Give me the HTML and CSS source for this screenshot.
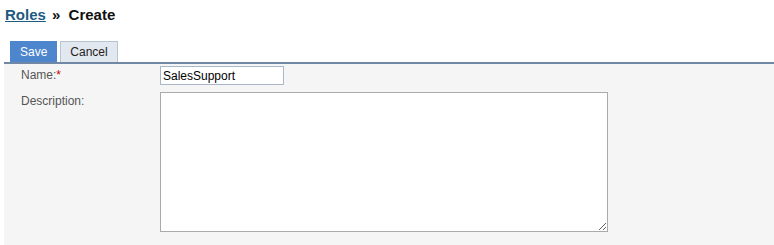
FILE: index.html
```html
<!DOCTYPE html>
<html lang="en">
<head>
    <meta charset="UTF-8">
    <title>Roles - Create</title>
    <link rel="stylesheet" href="styles.css">
</head>
<body>
    <h1 class="crumbs"><a href="#">Roles</a> <span class="sep">&raquo;</span> Create</h1>
    <div class="toolbar">
        <button class="tab primary">Save</button>
        <button class="tab">Cancel</button>
    </div>
    <div class="panel">
        <div class="row">
            <label for="name">Name:<span class="req">*</span></label>
            <input type="text" id="name" value="SalesSupport">
        </div>
        <div class="row">
            <label for="desc">Description:</label>
            <textarea id="desc"></textarea>
        </div>
    </div>
</body>
</html>
```

FILE: styles.css
```css
body {
    margin: 0;
    font-family: Arial, "Liberation Sans", sans-serif;
    font-size: 12px;
    color: #333;
    background: #fff;
}

.crumbs {
    margin: 0;
    padding: 6px 5px 0;
    height: 34px;
    box-sizing: border-box;
    font-size: 15px;
    font-weight: bold;
    color: #111;
}

.crumbs a {
    color: #1d5a7f;
}

.crumbs .sep {
    margin: 0 4px 0 2px;
}

.toolbar {
    margin-left: 4px;
    padding: 7px 0 0 6px;
    display: flex;
    gap: 3px;
    border-bottom: 2px solid #7088a6;
}

.tab {
    font-family: Arial, "Liberation Sans", sans-serif;
    font-size: 12px;
    height: 21px;
    padding: 0 9px;
    border: 1px solid #b8c4d4;
    border-bottom: none;
    background: #e2e8f0;
    color: #222;
}

.tab.primary {
    background: #4d86cc;
    border-color: #4d86cc;
    color: #fff;
}

.panel {
    margin-left: 4px;
    background: #f5f5f5;
    padding: 2px 0 0 17px;
    height: 181px;
}

.row {
    display: flex;
    margin-bottom: 7px;
}

.row label {
    width: 139px;
    color: #555;
    padding-top: 2px;
}

.req {
    color: #c00;
}

#name {
    width: 124px;
    height: 19px;
    box-sizing: border-box;
    border: 1px solid #a9b8c8;
    padding: 0 2px;
    font-family: Arial, "Liberation Sans", sans-serif;
    font-size: 12px;
    color: #000;
}

#desc {
    width: 448px;
    height: 140px;
    box-sizing: border-box;
    border: 1px solid #aaa;
    margin: 0;
    font-family: Arial, "Liberation Sans", sans-serif;
}
```
